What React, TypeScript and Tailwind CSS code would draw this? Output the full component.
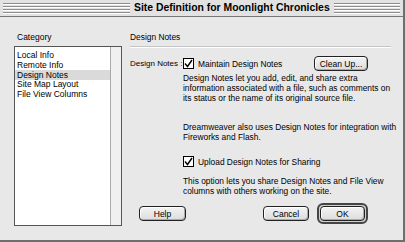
import React from "react";

function Stripes({ cls }: { cls: string }) {
  return (
    <div className={`${cls} flex flex-col gap-px`}>
      <div className="h-px bg-[#8c8c8c] border-b border-white box-content" />
      <div className="h-px bg-[#8c8c8c] border-b border-white box-content" />
      <div className="h-px bg-[#8c8c8c] border-b border-white box-content" />
      <div className="h-px bg-[#8c8c8c] border-b border-white box-content" />
    </div>
  );
}

function Check() {
  return (
    <div className="w-[11px] h-[11px] border border-black bg-white flex items-center justify-center shrink-0">
      <svg width="9" height="9" viewBox="0 0 9 9">
        <path d="M1 4.5 L3.5 7.5 L8 1" stroke="black" strokeWidth="1.4" fill="none" />
      </svg>
    </div>
  );
}

function Btn({ label, w, def }: { label: string; w: string; def?: boolean }) {
  const inner = (
    <div
      className={`${w} h-[15px] rounded-[4px] border border-[#222] bg-gradient-to-b from-[#f4f4f4] to-[#dcdcdc] shadow-[inset_1px_1px_0_#fff,inset_-1px_-1px_0_#aaa] flex items-center justify-center text-[8.5px]`}
    >
      {label}
    </div>
  );
  if (def) {
    return (
      <div className="rounded-[6px] border-[2px] border-[#444] bg-[#cfcfcf] p-[1px]">{inner}</div>
    );
  }
  return inner;
}

export default function App() {
  const items = ["Local Info", "Remote Info", "Design Notes", "Site Map Layout", "File View Columns"];
  return (
    <div
      className="w-[405px] h-[242px] bg-[#e8e8e8] border-r-2 border-b-2 border-[#6e6e6e] flex flex-col text-black overflow-hidden"
      style={{ fontFamily: '"Liberation Sans", Arial, sans-serif' }}
    >
      <div className="h-[17px] flex items-center gap-[4px] px-[3px] border-b border-[#777] bg-[#e2e2e2] shrink-0">
        <Stripes cls="w-[127px] shrink-0" />
        <div className="text-[10.4px] font-bold leading-none whitespace-nowrap">Site Definition for Moonlight Chronicles</div>
        <Stripes cls="flex-1" />
      </div>
      <div className="flex flex-1 pl-[14px] pr-[2px]">
        <div className="w-[108px] flex flex-col">
          <div className="mt-[15px] pl-[3px] text-[8.5px] leading-[10px]">Category</div>
          <div className="mt-[4px] h-[180px] border border-[#555] bg-white flex">
            <div className="flex-1 pt-[4px] flex flex-col">
              {items.map((it) => (
                <div
                  key={it}
                  className={`h-[9.6px] flex items-center pl-[2px] text-[8.5px] ${it === "Design Notes" ? "bg-[#dadada]" : ""}`}
                >
                  {it}
                </div>
              ))}
            </div>
            <div className="w-[11px] bg-[#f0f0f0] border-l border-[#aaa]" />
          </div>
        </div>
        <div className="flex-1 ml-[8px] flex flex-col text-[8.4px] leading-[10px]">
          <div className="mt-[15px]">Design Notes</div>
          <div className="mt-[4px] mr-[10px] h-px bg-[#c4c4c4] border-b border-white box-content" />
          <div className="mt-[8px] flex items-center">
            <div className="w-[53px] whitespace-nowrap text-[8px]">Design Notes :</div>
            <Check />
            <div className="ml-[4px] flex-1">Maintain Design Notes</div>
            <div className="mr-[33px]">
              <Btn label="Clean Up..." w="w-[54px]" />
            </div>
          </div>
          <div className="ml-[53px] mt-[2px] whitespace-nowrap">
            Design Notes let you add, edit, and share extra
            <br />
            information associated with a file, such as comments on
            <br />
            its status or the name of its original source file.
          </div>
          <div className="ml-[53px] mt-[19px] whitespace-nowrap">
            Dreamweaver also uses Design Notes for integration with
            <br />
            Fireworks and Flash.
          </div>
          <div className="ml-[53px] mt-[14px] flex items-center">
            <Check />
            <div className="ml-[4px]">Upload Design Notes for Sharing</div>
          </div>
          <div className="ml-[53px] mt-[9px] whitespace-nowrap">
            This option lets you share Design Notes and File View
            <br />
            columns with others working on the site.
          </div>
          <div className="mt-[7px] flex items-center">
            <div className="ml-[9px]">
              <Btn label="Help" w="w-[47px]" />
            </div>
            <div className="flex-1" />
            <Btn label="Cancel" w="w-[46px]" />
            <div className="ml-[8px] mr-[33px]">
              <Btn label="OK" w="w-[45px]" def />
            </div>
          </div>
        </div>
      </div>
    </div>
  );
}
